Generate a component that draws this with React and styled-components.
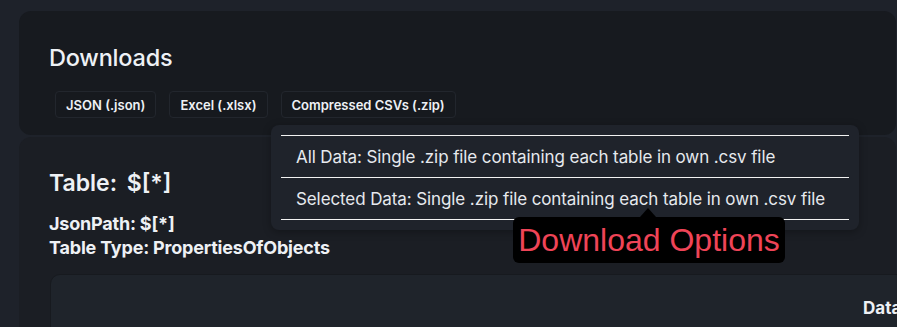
import React from "react"
import styled, { createGlobalStyle } from "styled-components"

const Global = createGlobalStyle`
  html, body {
    margin: 0;
    background: #1e222a;
    font-family: Inter, "Open Sans", sans-serif;
    color: #eef1f5;
  }
`

const Page = styled.div`
  position: relative;
  width: 897px;
  height: 327px;
  overflow: hidden;
  padding: 11px 1px 0 19px;
  box-sizing: border-box;
  display: flex;
  flex-direction: column;
  gap: 2px;
`

const Panel = styled.section`
  background: ${p => p.$bg};
  border-radius: 12px;
  padding: ${p => p.$pad};
  box-sizing: border-box;
  height: ${p => p.$h || "auto"};
  flex-shrink: 0;
`

const Title = styled.h2`
  margin: 0;
  font-size: 23.5px;
  font-weight: 500;
  letter-spacing: -0.2px;
  line-height: 28px;
`

const ButtonRow = styled.div`
  display: flex;
  gap: 13px;
  margin: 19px 0 0 6px;
`

const DlButton = styled.button`
  font-family: inherit;
  font-size: 13px;
  font-weight: 600;
  color: #eef1f5;
  background: #16191e;
  border: 1px solid #22262d;
  border-radius: 4px;
  height: 27px;
  padding: 0 10px;
`

const TableTitle = styled.h3`
  margin: 0;
  font-size: 23px;
  font-weight: 600;
  line-height: 28px;
  word-spacing: 4px;
`

const Meta = styled.div`
  font-size: 18px;
  font-weight: 700;
  line-height: 24px;
  letter-spacing: -0.2px;
`

const MetaBlock = styled.div`
  margin-top: 15px;
`

const Card = styled.div`
  margin: 14px 0 0 1px;
  width: 900px;
  height: 80px;
  background: #1f242b;
  border: 1px solid #171a1f;
  border-radius: 10px;
  padding: 23px 0 0 812px;
  box-sizing: border-box;
`

const HeadCell = styled.span`
  font-size: 17px;
  font-weight: 700;
`

const Popover = styled.div`
  position: absolute;
  left: 271px;
  top: 125px;
  width: 588px;
  background: #1f232b;
  border-radius: 8px;
  padding: 10px 10px;
  box-sizing: border-box;
  box-shadow: 0 2px 8px rgba(0, 0, 0, 0.3);
`

const Option = styled.div`
  height: 41px;
  display: flex;
  align-items: center;
  padding-left: 15px;
  border-top: 1px solid #f2f2f2;
  font-size: 17px;
  font-weight: 400;
  color: #e6e9ee;
  letter-spacing: -0.1px;
  &:last-child {
    border-bottom: 1px solid #f2f2f2;
  }
`

const Tooltip = styled.div`
  position: absolute;
  left: 513px;
  top: 217px;
  width: 272px;
  height: 46px;
  background: #000;
  border-radius: 6px;
  color: #ef4457;
  font-family: "Liberation Sans", Arial, sans-serif;
  font-size: 32px;
  line-height: 46px;
  text-align: center;
  &:before {
    content: "";
    position: absolute;
    left: 127px;
    top: -9px;
    border-left: 8px solid transparent;
    border-right: 8px solid transparent;
    border-bottom: 9px solid #000;
  }
`

export default function App() {
  return (
    <>
      <Global />
      <Page>
        <Panel $bg="#171a1f" $pad="33px 30px 0" $h="124px">
          <Title>Downloads</Title>
          <ButtonRow>
            <DlButton>JSON (.json)</DlButton>
            <DlButton>Excel (.xlsx)</DlButton>
            <DlButton>Compressed CSVs (.zip)</DlButton>
          </ButtonRow>
        </Panel>
        <Panel $bg="#1b1e24" $pad="32px 30px 0" $h="200px">
          <TableTitle>Table: $[*]</TableTitle>
          <MetaBlock>
            <Meta>JsonPath: $[*]</Meta>
            <Meta>Table Type: PropertiesOfObjects</Meta>
          </MetaBlock>
          <Card>
            <HeadCell>Data</HeadCell>
          </Card>
        </Panel>
        <Popover>
          <Option>All Data: Single .zip file containing each table in own .csv file</Option>
          <Option>Selected Data: Single .zip file containing each table in own .csv file</Option>
        </Popover>
        <Tooltip>Download Options</Tooltip>
      </Page>
    </>
  )
}
